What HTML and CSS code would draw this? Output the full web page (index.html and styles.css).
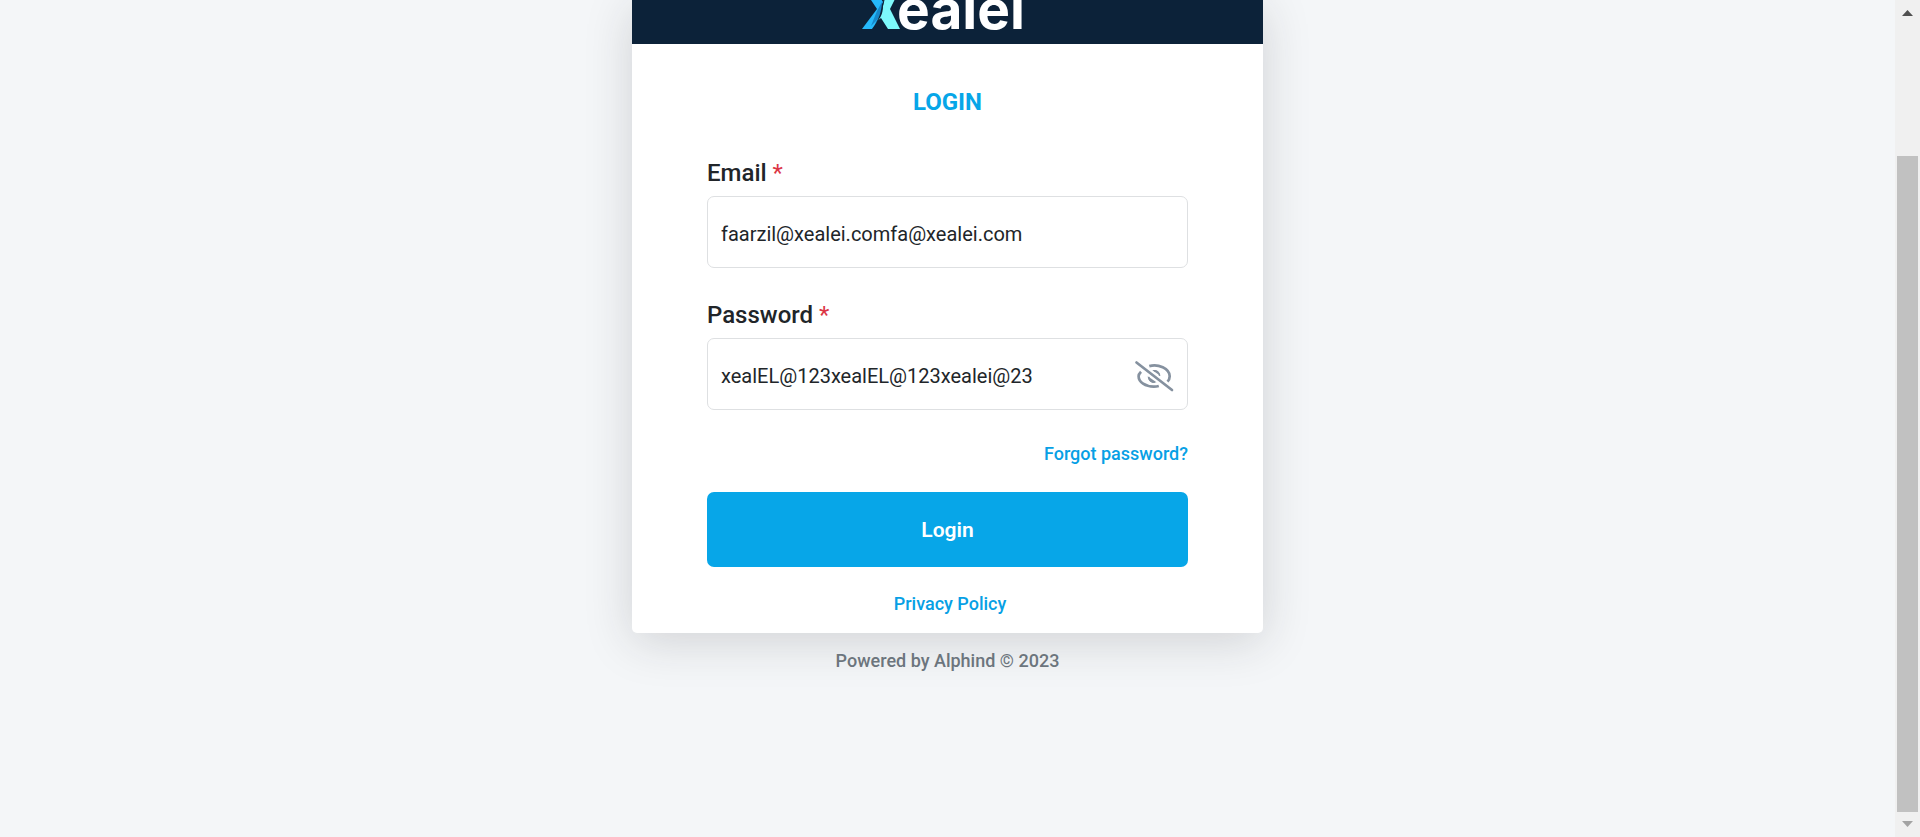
FILE: index.html
```html
<!DOCTYPE html>
<html lang="en">
<head>
<meta charset="utf-8">
<title>Xealei - Login</title>
<link rel="stylesheet" href="styles.css">
</head>
<body>
<div class="page">
  <main class="content">
    <section class="card">
      <header class="brand">
        <svg class="brand-mark" viewBox="0 0 38 44" aria-hidden="true">
          <path fill="#25b9fb" d="M0 44 15 24 3 6H14L21 17C21 27 17 34 10 44Z"/>
          <path fill="#1687c9" d="M15 26 20 17 20 25 16 34 9 41Z"/>
          <path fill="#7df9fb" d="M26 6H37L28 24 38 44H26L19 33 15 36C20 30 21 21 22 15Z"/>
          <path fill="#0c2239" d="M23 13 21 21C21 29 18 34 13 39 18 32 19 26 20 19Z"/>
        </svg>
        <span class="brand-name">ealei</span>
      </header>
      <form class="form">
        <h1 class="title">LOGIN</h1>
        <div class="field">
          <label class="label" for="email">Email <span class="required">*</span></label>
          <input class="input" id="email" type="text" value="faarzil@xealei.comfa@xealei.com">
        </div>
        <div class="field">
          <label class="label" for="password">Password <span class="required">*</span></label>
          <div class="input-wrap">
            <input class="input" id="password" type="text" value="xealEL@123xealEL@123xealei@23">
            <button class="toggle" type="button" aria-label="Hide password">
              <svg viewBox="0 0 40 32" width="40" height="32" fill="none" stroke="#85919f" stroke-width="2.7">
                <path d="M15.3 6.1C24 3.4 35.7 8.5 35.7 16.3C35.7 18.5 34.8 20.2 33.5 21.6"/>
                <path d="M7 11.8C5.6 13.2 4.6 14.8 4.6 16.3C4.6 22.2 11.5 26.6 19.8 26.6C21.6 26.6 23.3 26.4 24.8 26"/>
                <path d="M18.3 10.2C22.5 9.2 25.4 11.5 26 15.5Z" fill="#85919f" stroke="none"/>
                <path d="M13.7 16.3C14 21.5 18 23.9 22.5 22.3Z" fill="#85919f" stroke="none"/>
                <path d="M20 10.7C23.5 11 25.4 13.2 25.7 15.8M14.7 17C15.3 20.3 17.5 22.1 20.8 22.2" stroke-width="1.5"/>
                <path d="M2.5 2.5 38 30" stroke-linecap="round"/>
              </svg>
            </button>
          </div>
        </div>
        <a class="link forgot" href="#">Forgot password?</a>
        <button class="submit" type="submit">Login</button>
        <a class="link privacy" href="#">Privacy Policy</a>
      </form>
    </section>
    <footer class="footer">Powered by Alphind © 2023</footer>
  </main>
  <div class="scrollbar" aria-hidden="true">
    <svg class="arrow" viewBox="0 0 11 6" width="11" height="6"><path fill="#505050" d="M0 6 5.5 0 11 6Z"/></svg>
    <div class="track"><div class="thumb"></div></div>
    <svg class="arrow" viewBox="0 0 11 6" width="11" height="6"><path fill="#a3a3a3" d="M0 0H11L5.500 6Z"/></svg>
  </div>
</div>
</body>
</html>
```
FILE: styles.css
```css
* {
  box-sizing: border-box;
}

body {
  margin: 0;
  background: #f4f6f8;
  color: #212529;
  font-family: Roboto, "Liberation Sans", sans-serif;
}

.page {
  display: flex;
  min-height: 100vh;
}

.content {
  flex: 1;
  display: flex;
  flex-direction: column;
  align-items: center;
}

.card {
  width: 33.3%;
  min-width: 360px;
  background: #fff;
  border-radius: 0 0 5px 5px;
  box-shadow: 0 8px 48px rgba(33, 33, 41, 0.17);
}

.brand {
  display: flex;
  justify-content: center;
  align-items: flex-end;
  height: 44px;
  padding: 0 8px 15px 0;
  overflow: hidden;
  background: #0c2239;
}

.brand-mark {
  flex: none;
  width: 38px;
  height: 44px;
}

.brand-name {
  height: 44px;
  margin-left: -3px;
  color: #fff;
  font-family: Inter, sans-serif;
  font-size: 55px;
  font-weight: 700;
  line-height: 48px;
}

.form {
  display: flex;
  flex-direction: column;
  padding: 40px 75px 14px;
}

.title {
  margin: 0 0 35px;
  color: #07a6e8;
  font-size: 24px;
  font-weight: 700;
  line-height: 36px;
  text-align: center;
}

.field {
  display: flex;
  flex-direction: column;
  gap: 5px;
  margin-bottom: 29px;
}

.label {
  font-size: 24px;
  font-weight: 500;
  line-height: 36px;
}

.required {
  color: #dc3545;
  font-weight: 400;
}

.input-wrap {
  position: relative;
}

.input {
  display: block;
  width: 100%;
  height: 72px;
  padding: 4px 13px 0;
  border: 1px solid #dee0e2;
  border-radius: 7px;
  background: #fff;
  color: #212529;
  font: 400 20px Roboto, "Liberation Sans", sans-serif;
}

.toggle {
  position: absolute;
  top: 22px;
  right: 14px;
  display: flex;
  padding: 0;
  border: 0;
  background: none;
}

.link {
  color: #07a0e5;
  font-size: 18px;
  font-weight: 500;
  line-height: 30px;
  text-decoration: none;
}

.forgot {
  align-self: flex-end;
  margin-bottom: 23px;
}

.submit {
  height: 75px;
  margin-bottom: 22px;
  border: 0;
  border-radius: 7px;
  background: #07a6e8;
  color: #fff;
  font: 600 21px Roboto, "Liberation Sans", sans-serif;
}

.privacy {
  align-self: center;
  padding-left: 5px;
}

.footer {
  z-index: 1;
  margin-top: 13px;
  color: #6c757d;
  font-size: 18px;
  font-weight: 500;
  line-height: 30px;
}

.scrollbar {
  display: flex;
  flex-direction: column;
  align-items: center;
  width: 25px;
  padding: 10px 2px;
  background: #f0f0f0;
}

.arrow {
  flex: none;
}

.track {
  flex: 1;
  display: flex;
  flex-direction: column;
  justify-content: flex-end;
  width: 100%;
  padding-bottom: 9px;
}

.thumb {
  height: 82.4%;
  background: #c1c1c1;
}
```
